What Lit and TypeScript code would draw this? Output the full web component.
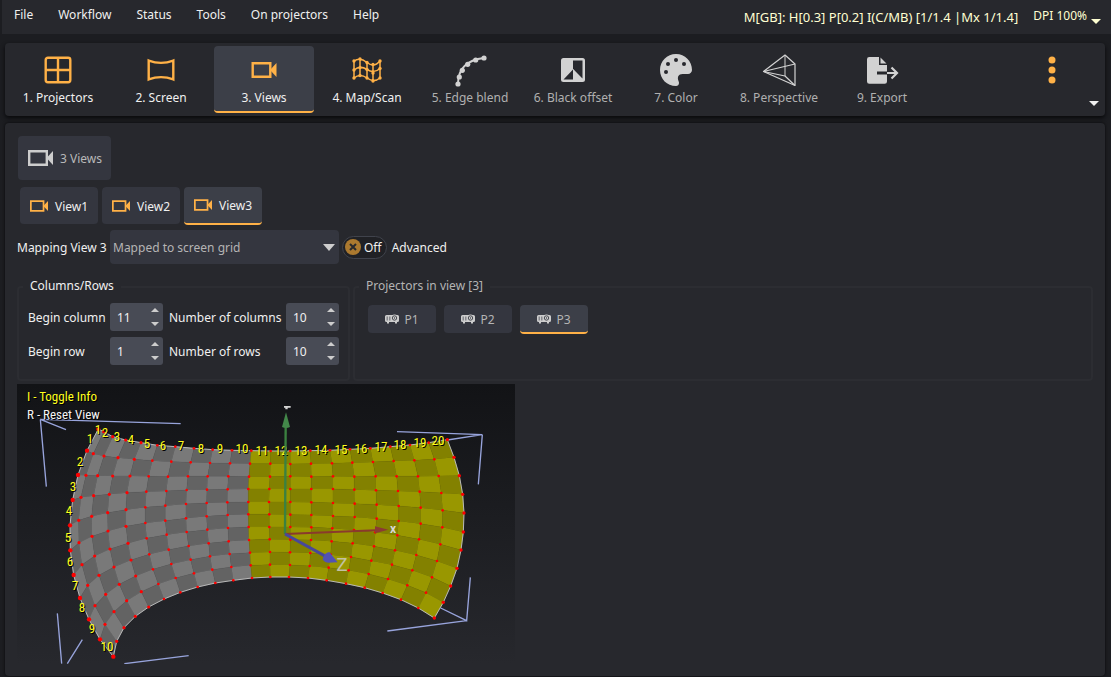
import { LitElement, html, svg, css } from 'lit';
import { customElement, property, state } from 'lit/decorators.js';
import { classMap } from 'lit/directives/class-map.js';

/* ---------- icons ---------- */

const camera = svg`
  <path fill="none" stroke="currentColor" stroke-width="2.4" d="M1.2 1.2h17.6v13.6H1.2z"/>
  <path fill="currentColor" d="M18.500 8l6.500-7v14z"/>`;

const cameraIcon = (w: number, h: number) =>
  html`<svg width=${w} height=${h} viewBox="0 0 25 16" aria-hidden="true">${camera}</svg>`;

const curveDots = [[4, 29], [5.3, 22], [8.3, 15.3], [13.7, 9.3], [21.7, 5], [30, 3]];

const mapDots = [
  [3, 6], [9, 4], [16, 7.5], [22, 9.5], [29, 6],
  [3, 15], [9, 12.5], [16, 14.5], [22, 18], [29, 13.5],
  [3, 23], [9, 20.5], [16, 23], [22, 26], [29, 23],
];

const projectorsIcon = svg`<g fill="none" stroke="currentColor" stroke-width="2.4">
  <rect x="3.7" y="2.7" width="24.6" height="24.6" rx="2.2"/><path d="M16 2.7v24.6M3.7 15h24.6"/></g>`;
const screenIcon = svg`<path fill="none" stroke="currentColor" stroke-width="2.4"
  d="M3.7 5.6q12.3 4.6 24.6 0v18.8q-12.3-4.6-24.6 0z"/>`;
const viewsIcon = svg`<g transform="translate(3.500 7)">${camera}</g>`;
const mapIcon = svg`
  <path fill="none" stroke="currentColor" stroke-width="1.500"
    d="M3 6Q9 2 16 7.500T29 6M3 15Q9 10 16 14.500T29 13.500M3 23Q9 18 16 23T29 23M3 6v17M9 4v16.500M16 7.500V23M22 9.500V26M29 6v17"/>
  ${mapDots.map(([x, y]) => svg`<circle cx=${x} cy=${y} r="1.700" fill="currentColor"/>`)}`;
const blendIcon = svg`
  <path fill="none" stroke="currentColor" stroke-width="2" d="M4 29Q4 6 30 3"/>
  ${curveDots.map(([x, y]) => svg`<circle cx=${x} cy=${y} r="2.600" fill="currentColor"/>`)}`;
const offsetIcon = svg`
  <rect x="4" y="3" width="24" height="24" rx="2.500" fill="currentColor"/>
  <path fill="#27282d" d="M16 5.500h9.500v18L16 14zM16 14.500V24.500H6.500z"/>
  <path fill="currentColor" d="M16 14l9.500 10.500H16z"/>`;
const colorIcon = svg`
  <path fill="currentColor" d="M16-1C7 -1 0 6 0 15s7 16 16 16c1.700 0 3-1.300 3-3 0-.8-.2-1.300-.5-2-1.500-4 0-7 4-7h5.500c2.200 0 4-1.800 4-4C32 6 25-1 16-1z"/>
  <g fill="#27282d"><circle cx="6" cy="17" r="2"/><circle cx="8" cy="9" r="2"/><circle cx="16" cy="5" r="2"/><circle cx="24" cy="9" r="2"/></g>`;
const perspectiveIcon = svg`
  <g fill="none" stroke="currentColor" stroke-width="1.200" stroke-linejoin="round">
    <path d="M.5 16.500L22 0l10 9v21.500z"/><path d="M.5 16.500L32 9M.5 16.500L22 21l10 9.500"/>
  </g><path stroke="currentColor" stroke-width="1.800" opacity=".55" d="M22 0v21"/>`;
const exportIcon = svg`
  <path fill="currentColor" d="M3.300 2H13v8h8v6.500H11v3h10v7a2.300 2.300 0 0 1-2.300 2.300H3.300A2.300 2.300 0 0 1 1 26.500V4.300A2.300 2.300 0 0 1 3.300 2zM14.500 2.600L20.500 8.600h-6z"/>
  <path fill="none" stroke="currentColor" stroke-width="2.200" d="M21 18h9M25.500 12.500L31 18l-5.500 5.500"/>`;

const projectorIcon = html`<svg width="14" height="10" viewBox="0 0 14 10" aria-hidden="true">
  <path fill="#cdcdcd" d="M1.500 1h11A1.500 1.500 0 0 1 14 2.500v4A1.500 1.500 0 0 1 12.500 8H12v1.500h-2V8H4v1.500H2V8h-.5A1.500 1.500 0 0 1 0 6.500v-4A1.500 1.500 0 0 1 1.500 1z"/>
  <circle cx="9.500" cy="4" r="3.500" fill="#cdcdcd"/>
  <circle cx="9.500" cy="4" r="2.200" fill="none" stroke="#3a3c44" stroke-width=".9"/><circle cx="9.500" cy="4" r=".7" fill="#3a3c44"/>
  <path fill="#85868b" d="M1.500 2.500h1.500v4H1.500zM4 2.500h1.500v4H4z"/></svg>`;

const caret = html`<svg class="caret" width="10" height="5" viewBox="0 0 10 5" aria-hidden="true">
  <path fill="currentColor" d="M0 0h10L5 5z"/></svg>`;

/* ---------- screen mesh, in thirds of a pixel ---------- */

const parse = (s: string) => s.trim().split(/\s+/).map(p => p.split(',').map(Number));

const MESH: number[][][] = [
  '244,135 260,143 287,158 326,168 372,176 421,184 475,188 531,193 587,197 645,199 703,200 761,201 820,201 880,200 939,199 999,196 1060,193 1120,188 1179,183 1235,176 1291,167',
  '210,200 229,209 261,216 303,221 352,226 406,230 463,233 521,235 579,237 639,238 699,239 760,239 820,240 882,239 945,238 1006,236 1068,234 1130,231 1192,229 1252,226 1311,220',
  '183,273 207,274 242,275 287,276 339,276 395,277 453,278 513,277 572,277 634,277 696,278 759,278 820,277 883,278 948,277 1012,278 1076,277 1139,277 1203,277 1265,276 1327,275',
  '167,348 192,340 230,335 277,331 330,326 388,323 448,321 509,318 570,317 632,316 694,315 757,315 820,315 883,315 948,315 1012,317 1077,319 1143,321 1208,323 1273,327 1337,331',
  '159,424 185,409 224,397 272,386 327,377 385,370 445,365 507,360 569,357 631,355 694,354 756,354 820,354 883,355 948,357 1013,359 1079,362 1145,366 1211,371 1277,379 1341,387',
  '160,499 186,476 225,457 273,441 327,427 385,417 445,410 507,403 569,397 632,393 694,391 757,391 820,392 883,393 948,396 1013,399 1079,404 1145,411 1211,419 1276,430 1339,444',
  '170,573 195,542 233,516 279,495 333,478 389,463 449,452 509,444 571,437 633,432 695,429 757,429 820,429 883,430 946,433 1011,438 1075,445 1141,454 1206,466 1270,481 1332,498',
  '189,642 212,604 246,574 291,549 342,528 397,511 455,497 515,486 575,478 635,472 696,468 758,466 820,467 882,468 944,472 1007,478 1071,487 1134,499 1198,513 1260,531 1320,553',
  '216,706 234,665 266,631 307,601 356,576 408,556 463,540 521,527 579,517 638,510 699,506 759,504 819,505 880,507 941,512 1002,519 1063,530 1125,542 1186,559 1245,580 1301,606',
  '249,766 264,721 291,683 329,650 373,623 424,600 476,582 531,568 586,557 643,549 701,544 759,542 819,543 878,546 935,551 995,559 1055,570 1113,585 1171,604 1227,626 1279,655',
  '289,818 299,772 321,731 355,697 395,669 441,645 490,625 542,609 595,597 649,589 705,582 760,579 816,579 873,582 929,589 987,599 1043,611 1097,627 1152,647 1204,672 1252,702',
].map(parse);

const COLUMN_LABELS = parse('81,46 88,49 100,53 114,56 130,60 146,62 164,62 184,65 203,65 225,65 245,67 264,67 284,67 304,66 324,66 344,65 364,63 383,61 403,59 421,57');
const ROW_LABELS = parse('73,55 63,78 56,103 52,127 51,154 53,178 58,202 65,224 75,245 90,263');

const BOUNDS = 'M491 119L70 106L147 137M70 106L88 308M121 688L134 839M196 767L151 839M322 839L515 815M1140 143L1396 152L1291 168M1396 152L1384 301M1360 580L1349 710L1271 672M1349 710L1111 741';

@customElement('screen-view')
export class ScreenView extends LitElement {
  @property({ type: Number }) begin = 11;
  @property({ type: Number }) count = 10;

  static styles = css`
    :host { display: block; background: linear-gradient(#121316, #27282d); }
    svg { display: block; width: 100%; height: auto; }
    text { font-family: "Roboto Condensed", "Roboto", sans-serif; font-size: 13px; }
    .label { fill: #ffff1e; text-anchor: middle; }
    .info { fill: #ffff1e; }
    .plain { fill: #f4f4f4; }
    .label, .info, .plain { text-shadow: 1px 1px 0 #000; }
    .axis { fill: #d8d8d8; text-anchor: middle; font-family: "Roboto", sans-serif; }
    .z { fill: #c2c2a4; font-size: 19px; }
    .x { font-size: 12px; font-weight: 700; }
  `;

  private cells() {
    const out = [];
    for (let r = 0; r < 10; r++) {
      for (let c = 0; c < 20; c++) {
        const used = c + 1 >= this.begin && c + 1 < this.begin + this.count;
        const even = (r + c) % 2 === 0;
        const fill = used ? (even ? '#999700' : '#838100') : (even ? '#797979' : '#636363');
        const pts = [MESH[r][c], MESH[r][c + 1], MESH[r + 1][c + 1], MESH[r + 1][c]].join(' ');
        out.push(svg`<polygon points=${pts} fill=${fill} stroke=${fill} stroke-width="1"/>`);
      }
    }
    return out;
  }

  private text(x: number, y: number, text: string | number, cls: string) {
    return svg`<text class=${cls} x=${x} y=${y}>${text}</text>`;
  }

  render() {
    const outline = [
      ...MESH[0], ...MESH.map(r => r[20]), ...[...MESH[10]].reverse(), ...MESH.map(r => r[0]).reverse(),
    ].join(' ');
    return html`<svg viewBox="0 0 498 280" role="img" aria-label="Screen mesh preview">
      <g transform="scale(0.33333)">
        <path d=${BOUNDS} fill="none" stroke="#98a4dc" stroke-width="4"/>
        ${this.cells()}
        <polygon points=${outline} fill="none" stroke="#b9b9b9" stroke-width="3"/>
        ${MESH.map((row, r) => row.map(([x, y], c) => svg`
          <circle cx=${x} cy=${y} r=${c === 0 ? 6.5 : c === 20 ? 5 : c < 5 ? 4.8 : 4} fill="#ff0000"/>`))}
      </g>
      ${ROW_LABELS.map(([x, y], i) => this.text(x, y + 4, i + 1, 'label'))}
      ${COLUMN_LABELS.map(([x, y], i) => this.text(x, y + 4, i + 1, 'label'))}
      <g transform="scale(0.33333)">
        <path d="M806 130L804 450" stroke="#3b8140" stroke-width="7"/>
        <path d="M807 85l12 44q-12 6-24 0z" fill="#43884a"/>
        <path d="M801 66h20v5h-9v5h-7v-5h-4z" fill="#d4d4d4"/>
        <path d="M804 450L1076 439" stroke="#8a3a2c" stroke-width="6"/>
        <path d="M1114 437l-40-10v21z" fill="#8c3a34"/>
        <path d="M804 450L926 517" stroke="#48489a" stroke-width="9"/>
        <path d="M962 535l-25-31q-16 2-20 23q6 8 16 9z" fill="#5252b4"/>
      </g>
      <text class="axis x" x="376" y="149">x</text>
      <text class="axis z" x="325" y="187">Z</text>
      ${this.text(10, 17, 'I - Toggle Info', 'info')}
      ${this.text(10, 35, 'R - Reset View', 'plain')}
    </svg>`;
  }
}

/* ---------- number box with step buttons ---------- */

@customElement('spin-box')
export class SpinBox extends LitElement {
  @property({ type: Number }) value = 0;
  @property() label = '';

  static styles = css`
    :host { display: contents; font: inherit; }
    label { align-self: center; padding-top: 2px; color: #f0f0f0; white-space: nowrap; }
    .box { display: grid; grid-template-columns: 1fr 12px; width: 53px; height: 28px; border-radius: 3px; background: #484b55; }
    input { min-width: 0; padding: 2px 0 0 7px; border: 0; background: none; color: #f0f0f0; font: inherit; appearance: textfield; outline: none; }
    input::-webkit-inner-spin-button { display: none; }
    .steps { display: flex; flex-direction: column; justify-content: space-between; padding: 4px 0; }
    button { display: block; border: 0; padding: 0; background: none; color: #cdcdcd; }
    svg { display: block; }
  `;

  private step(by: number) {
    this.value = Math.max(1, this.value + by);
    this.dispatchEvent(new CustomEvent('step', { detail: this.value }));
  }

  render() {
    return html`
      <label for="n">${this.label}</label>
      <div class="box">
        <input id="n" type="number" min="1" .value=${String(this.value)}>
        <div class="steps">
          <button aria-label="Increase" @click=${() => this.step(1)}><svg width="8" height="5" viewBox="0 0 8 5"><path fill="currentColor" d="M0 5h8L4 1z"/></svg></button>
          <button aria-label="Decrease" @click=${() => this.step(-1)}><svg width="8" height="5" viewBox="0 0 8 5"><path fill="currentColor" d="M0 0h8L4 4z"/></svg></button>
        </div>
      </div>`;
  }
}

/* ---------- application ---------- */

const STEPS = [
  { name: '1. Projectors', icon: projectorsIcon, ready: true },
  { name: '2. Screen', icon: screenIcon, ready: true },
  { name: '3. Views', icon: viewsIcon, ready: true },
  { name: '4. Map/Scan', icon: mapIcon, ready: true },
  { name: '5. Edge blend', icon: blendIcon, ready: false },
  { name: '6. Black offset', icon: offsetIcon, ready: false },
  { name: '7. Color', icon: colorIcon, ready: false },
  { name: '8. Perspective', icon: perspectiveIcon, ready: false },
  { name: '9. Export', icon: exportIcon, ready: false },
];

@customElement('app-root')
export class AppRoot extends LitElement {
  @state() private stepIndex = 2;
  @state() private view = 3;
  @state() private projector = 3;
  @state() private advanced = false;
  @state() private beginColumn = 11;
  @state() private columns = 10;

  static styles = css`
    :host {
      display: flex; flex-direction: column; box-sizing: border-box; min-height: 100vh;
      background: #1c1d21; color: #f0f0f0; font: 12px/16px "Noto Sans", sans-serif;
    }
    * { box-sizing: border-box; }
    button, select { font: inherit; color: inherit; border: 0; padding: 0; background: none; }
    svg { display: block; }

    .menubar { display: flex; align-items: flex-start; height: 34px; margin-left: 2px; padding: 7px 10px 0 12px; background: #27282d; }
    .menu { display: flex; gap: 25px; flex: 1; }
    .meter { display: flex; gap: 15px; color: #ffffd2; }
    .memory { padding-top: 2px; font-size: 13px; }
    .dpi { display: flex; gap: 4px; padding-top: 1px; align-items: flex-start; }
    .dpi .caret { margin-top: 11px; }
    .caret { flex: none; }

    .toolbar {
      display: flex; align-items: stretch; gap: 3px; margin: 9px 6px 0 5px; padding: 3px; height: 73px;
      border-radius: 4px; background: #27282d; box-shadow: 0 2px 4px #08080a;
    }
    .step {
      display: flex; flex-direction: column; align-items: center; gap: 5px; flex: 0 1 100px; padding-top: 9px;
      border-radius: 4px; border-bottom: 2px solid transparent; color: #f0f0f0; white-space: nowrap;
    }
    .step.off { color: #b0b0b0; }
    .step svg { color: #ffb147; overflow: visible; }
    .step.off svg { color: #d2d2d2; }
    .step.current { background: #3c3f48; border-bottom-color: #ffb147; }
    .more { display: flex; align-items: flex-start; gap: 33px; margin-left: auto; padding-right: 3px; }
    .dots { padding-top: 9px; color: #ffb147; }
    .expand { align-self: flex-end; padding-bottom: 7px; color: #f0f0f0; }

    .panel {
      flex: 1; margin: 7px 6px 1px 5px; padding: 13px 12px 5px; border-radius: 4px; background: #27282d;
      box-shadow: 0 0 3px #08080a;
    }
    .summary {
      display: flex; align-items: center; gap: 7px; min-width: 93px; height: 44px; margin-left: 1px; padding: 0 5px 0 10px;
      border-radius: 4px; background: #34363f; color: #b9b9b9;
    }
    .summary svg { color: #cdcdcd; }
    .summary span, .tab span, .chip span, .toggle span, .caption, .mapping label[for] { padding-top: 2px; }
    .tabs { display: flex; gap: 4px; margin: 7px 0 0 3px; }
    .tab {
      display: flex; align-items: center; gap: 7px; width: 78px; height: 38px; padding: 0 0 0 10px;
      border-radius: 4px; background: #34363f; border-bottom: 1px solid transparent; background-clip: padding-box; color: #f0f0f0;
    }
    .tab svg { color: #ffb147; }
    .current.tab, .current.chip { background: #3c3f48; border-bottom: 2px solid #ffb147; }

    .mapping { display: grid; grid-template-columns: 93px 229px auto auto 1fr; align-items: center; margin-top: 5px; white-space: nowrap; }
    .combo { position: relative; }
    .combo select { width: 100%; height: 34px; padding: 2px 0 0 3px; border-radius: 4px; background: #34363f; color: #b4b4b4; appearance: none; }
    .combo svg { position: absolute; right: 4px; top: 14px; color: #cdcdcd; pointer-events: none; }
    .toggle {
      display: flex; align-items: center; gap: 3px; height: 23px; margin-left: 3px; padding: 0 4px 0 2px;
      border: 1px solid #40434c; border-radius: 12px; background: #202125;
    }
    .toggle input { position: absolute; opacity: 0; width: 0; height: 0; margin: 0; }
    .caption { margin-left: 5px; }

    .groups { display: grid; grid-template-columns: 333px 1fr; gap: 3px; margin-top: 14px; }
    fieldset { margin: 0; min-width: 0; border: 2px solid #2c2d32; border-radius: 4px; }
    legend { padding: 0 7px 2px; }
    .grid { padding: 7px 9px 14px; }
    .grid legend { margin-left: -5px; }
    .fields { display: grid; grid-template-columns: 82px 59px 117px 53px; row-gap: 6px; }
    .used { padding: 9px 13px; color: #b4b4b4; }
    .used legend { margin-left: -9px; }
    .chips { display: flex; gap: 8px; }
    .chip {
      display: flex; align-items: center; justify-content: center; gap: 5px; width: 68px; height: 29px;
      border-radius: 4px; background: #34363f; border-bottom: 1px solid transparent; background-clip: padding-box; color: #b4b4b4;
    }
    .preview { width: 498px; max-width: 100%; margin-top: 3px; }
  `;

  render() {
    return html`
      <header class="menubar">
        <nav class="menu">
          ${['File', 'Workflow', 'Status', 'Tools', 'On projectors', 'Help'].map(m => html`<button>${m}</button>`)}
        </nav>
        <div class="meter">
          <span class="memory">M[GB]: H[0.3] P[0.2] I(C/MB) [1/1.4 |Mx 1/1.4]</span>
          <button class="dpi">DPI 100% ${caret}</button>
        </div>
      </header>

      <nav class="toolbar">
        ${STEPS.map((s, i) => html`
          <button class=${classMap({ step: true, off: !s.ready, current: i === this.stepIndex })}
            @click=${() => { this.stepIndex = i; }}>
            <svg width="32" height="30" viewBox="0 0 32 30" aria-hidden="true">${s.icon}</svg>
            <span>${s.name}</span>
          </button>`)}
        <div class="more">
          <button class="dots" aria-label="More">
            <svg width="8" height="30" viewBox="0 0 8 30" fill="currentColor"><circle cx="4" cy="5" r="3.500"/><circle cx="4" cy="15" r="3.500"/><circle cx="4" cy="25" r="3.500"/></svg>
          </button>
          <button class="expand" aria-label="Expand toolbar">${caret}</button>
        </div>
      </nav>

      <main class="panel">
        <button class="summary">${cameraIcon(25, 16)}<span>3 Views</span></button>

        <div class="tabs">
          ${[1, 2, 3].map(n => html`
            <button class=${classMap({ tab: true, current: n === this.view })} @click=${() => { this.view = n; }}>
              ${cameraIcon(18, 12)}<span>View${n}</span>
            </button>`)}
        </div>

        <div class="mapping">
          <label for="mapping">Mapping View ${this.view}</label>
          <div class="combo">
            <select id="mapping"><option>Mapped to screen grid</option></select>
            <svg width="12" height="7" viewBox="0 0 12 7" aria-hidden="true"><path fill="currentColor" d="M0 0h12L6 7z"/></svg>
          </div>
          <label class="toggle">
            <input type="checkbox" aria-labelledby="advanced" .checked=${this.advanced}
              @change=${() => { this.advanced = !this.advanced; }}>
            <svg width="16" height="16" viewBox="0 0 16 16" aria-hidden="true">
              <circle cx="8" cy="8" r="8" fill="#ab792f"/><path stroke="#27282d" stroke-width="2" d="M5 5l6 6M11 5l-6 6"/>
            </svg>
            <span>${this.advanced ? 'On' : 'Off'}</span>
          </label>
          <span class="caption" id="advanced">Advanced</span>
        </div>

        <div class="groups">
          <fieldset class="grid">
            <legend>Columns/Rows</legend>
            <div class="fields">
              <spin-box label="Begin column" .value=${this.beginColumn} @step=${(e: CustomEvent) => { this.beginColumn = e.detail; }}></spin-box>
              <spin-box label="Number of columns" .value=${this.columns} @step=${(e: CustomEvent) => { this.columns = e.detail; }}></spin-box>
              <spin-box label="Begin row" .value=${1}></spin-box>
              <spin-box label="Number of rows" .value=${10}></spin-box>
            </div>
          </fieldset>
          <fieldset class="used">
            <legend>Projectors in view [3]</legend>
            <div class="chips">
              ${[1, 2, 3].map(n => html`
                <button class=${classMap({ chip: true, current: n === this.projector })} @click=${() => { this.projector = n; }}>
                  ${projectorIcon}<span>P${n}</span>
                </button>`)}
            </div>
          </fieldset>
        </div>

        <screen-view class="preview" .begin=${this.beginColumn} .count=${this.columns}></screen-view>
      </main>`;
  }
}
